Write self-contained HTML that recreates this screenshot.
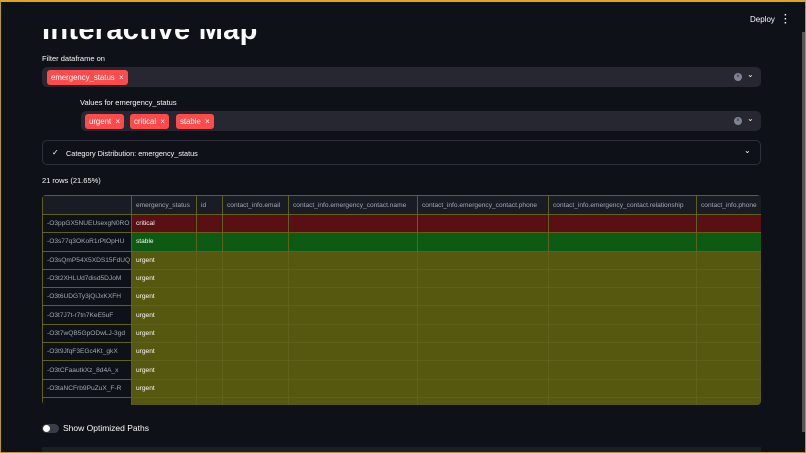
<!DOCTYPE html>
<html><head><meta charset="utf-8"><style>
*{box-sizing:border-box;margin:0;padding:0}
html,body{width:806px;height:453px;overflow:hidden;background:#0e1117;font-family:"Liberation Sans",sans-serif;color:#fafafa}
.frame{position:absolute;left:0;top:0;width:806px;height:453px;border:1px solid #b49a1e;border-top:2px solid #d9a820;pointer-events:none;z-index:10}
.abs{position:absolute}
.hdr{left:0;top:0;width:806px;height:29px;background:#0e1117;z-index:5}
.title{left:42px;top:13px;font-size:29px;font-weight:bold;line-height:34px;letter-spacing:0.3px}
.lbl{font-size:7.5px;color:#fafafa}
.box{background:#262730;border-radius:5px}
.tag{background:#ff4b4b;color:#fff;font-size:7.8px;border-radius:3px;height:15px;line-height:15px;padding:0 4px;display:inline-block;position:absolute;white-space:nowrap}
.clr{width:8px;height:8px;border-radius:50%;background:#808495;font-size:6px;line-height:8px;text-align:center;color:#262730}
table{border-collapse:collapse;font-size:6.6px;color:#fafafa;table-layout:fixed}
td,th{height:18.3px;padding:0 4px;border:1px solid rgba(255,255,255,0.05);white-space:nowrap;overflow:hidden;text-align:left;font-weight:normal}
th{color:#a3a8b4;background:#1a1c24;height:19px}
td.i{color:#a3a8b4;background:#0e1117}
tr.c td:not(.i){background:#5a0f12}
tr.s td:not(.i){background:#0d5a12}
tr.u td:not(.i){background:#575810}
</style></head><body>
<div class="frame"></div>
<div class="abs hdr"></div>
<div class="abs" style="left:750px;top:15px;font-size:8px;z-index:6">Deploy</div>
<div class="abs" style="left:784px;top:14px;font-size:10px;font-weight:bold;line-height:4px;z-index:6">·<br>·<br>·</div>
<div class="abs" style="left:802px;top:32px;width:3px;height:400px;background:#555"></div>
<div class="abs title">Interactive Map</div>
<div class="abs lbl" style="left:42px;top:54px">Filter dataframe on</div>
<div class="abs box" style="left:42px;top:67px;width:719px;height:20px"></div>
<span class="tag" style="left:47px;top:70px">emergency_status &nbsp;×</span>
<div class="abs clr" style="left:734px;top:73px">×</div>
<div class="abs" style="left:747px;top:70px;font-size:8px">⌄</div>
<div class="abs lbl" style="left:80px;top:98px">Values for emergency_status</div>
<div class="abs box" style="left:81px;top:111px;width:680px;height:20px"></div>
<span class="tag" style="left:85px;top:114px">urgent &nbsp;×</span>
<span class="tag" style="left:130px;top:114px">critical &nbsp;×</span>
<span class="tag" style="left:176px;top:114px">stable &nbsp;×</span>
<div class="abs clr" style="left:734px;top:117px">×</div>
<div class="abs" style="left:747px;top:114px;font-size:8px">⌄</div>
<div class="abs" style="left:42px;top:140px;width:719px;height:25px;border:1px solid #2e3039;border-radius:5px"></div>
<div class="abs" style="left:52px;top:148px;font-size:8px">✓</div>
<div class="abs lbl" style="left:66px;top:149px;font-size:7.3px">Category Distribution: emergency_status</div>
<div class="abs" style="left:744px;top:146px;font-size:8px">⌄</div>
<div class="abs lbl" style="left:42px;top:176px">21 rows (21.65%)</div>
<div class="abs" style="left:42px;top:195px;width:719px;height:210px;overflow:hidden;border-radius:4px;background:#575810">
<table style="width:719px">
<colgroup><col style="width:89px"><col style="width:65px"><col style="width:26px"><col style="width:66px"><col style="width:129px"><col style="width:131px"><col style="width:148px"><col style="width:65px"></colgroup>
<tr><th style="background:#1a1c24"></th><th>emergency_status</th><th>id</th><th>contact_info.email</th><th>contact_info.emergency_contact.name</th><th>contact_info.emergency_contact.phone</th><th>contact_info.emergency_contact.relationship</th><th>contact_info.phone</th></tr>
<tr class="c"><td class="i">-O3ppGX5NUEUsexgN0RO</td><td>critical</td><td></td><td></td><td></td><td></td><td></td><td></td></tr>
<tr class="s"><td class="i">-O3s77q3OKoR1rPtOpHU</td><td>stable</td><td></td><td></td><td></td><td></td><td></td><td></td></tr>
<tr class="u"><td class="i">-O3sQmP54X5XDS15FdUQ</td><td>urgent</td><td></td><td></td><td></td><td></td><td></td><td></td></tr>
<tr class="u"><td class="i">-O3t2XHLUd7disd5DJoM</td><td>urgent</td><td></td><td></td><td></td><td></td><td></td><td></td></tr>
<tr class="u"><td class="i">-O3t6UDGTy3jQiJxKXFH</td><td>urgent</td><td></td><td></td><td></td><td></td><td></td><td></td></tr>
<tr class="u"><td class="i">-O3t7J7t-r7tn7KeE5uF</td><td>urgent</td><td></td><td></td><td></td><td></td><td></td><td></td></tr>
<tr class="u"><td class="i">-O3t7wQB5GpODwLJ-3gd</td><td>urgent</td><td></td><td></td><td></td><td></td><td></td><td></td></tr>
<tr class="u"><td class="i">-O3t9JfqF3EGc4Kt_gkX</td><td>urgent</td><td></td><td></td><td></td><td></td><td></td><td></td></tr>
<tr class="u"><td class="i">-O3tCFaautkXz_8d4A_x</td><td>urgent</td><td></td><td></td><td></td><td></td><td></td><td></td></tr>
<tr class="u"><td class="i">-O3taNCFrb9PuZuX_F-R</td><td>urgent</td><td></td><td></td><td></td><td></td><td></td><td></td></tr>
<tr class="u"><td class="i"></td><td></td><td></td><td></td><td></td><td></td><td></td><td></td></tr>
</table></div>
<div class="abs" style="left:42px;top:424px;width:17px;height:9px;border-radius:5px;background:#3a3d47"></div>
<div class="abs" style="left:43px;top:425px;width:7px;height:7px;border-radius:50%;background:#fff"></div>
<div class="abs" style="left:63px;top:423px;font-size:8.5px">Show Optimized Paths</div>
<div class="abs" style="left:42px;top:447px;width:719px;height:6px;background:#15202a"></div>
</body></html>
